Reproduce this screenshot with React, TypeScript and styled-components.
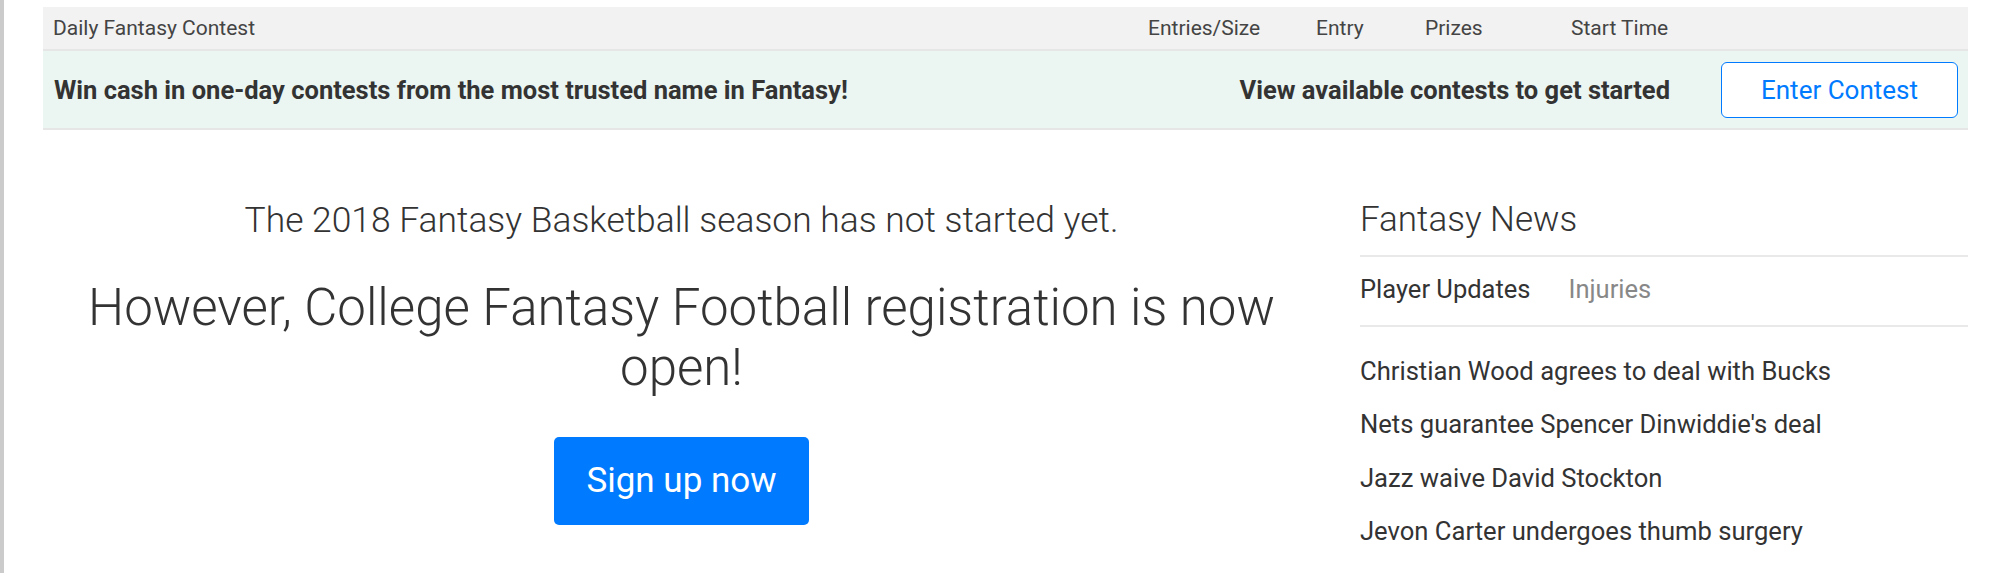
import React from "react";
import styled, { createGlobalStyle } from "styled-components";

const GlobalStyle = createGlobalStyle`
  html, body {
    margin: 0;
    padding: 0;
    background: #ffffff;
  }
  body {
    font-family: Roboto, "Noto Sans", "Liberation Sans", Arial, sans-serif;
    color: #333333;
  }
`;

const columns = "minmax(0, 1fr) 168px 109px 146px 120px 287px";

const Page = styled.div`
  display: flex;
  min-height: 100vh;
`;

const Rail = styled.div`
  flex: none;
  width: 4px;
  background: #cbcbcb;
`;

const Container = styled.div`
  flex: 1;
  min-width: 0;
  padding: 7px 36px 0 39px;
`;

const HeaderRow = styled.div`
  display: grid;
  grid-template-columns: ${columns};
  height: 42px;
  align-items: center;
  background: #f2f2f2;
  border-bottom: 2px solid #e6e6e6;
`;

const HeaderLabel = styled.div`
  padding: 0 10px;
  font-size: 21px;
  color: #444444;
  white-space: nowrap;
`;

const PromoRow = styled.div`
  display: grid;
  grid-template-columns: ${columns};
  height: 77px;
  align-items: center;
  background: #ebf5f2;
  border-bottom: 2px solid #e6e6e6;
`;

const PromoText = styled.div<{ $span: string; $right?: boolean }>`
  grid-column: ${(p) => p.$span};
  padding: 0 11px;
  font-size: 25.5px;
  font-weight: 700;
  color: #333333;
  white-space: nowrap;
  text-align: ${(p) => (p.$right ? "right" : "left")};
`;

const ActionCell = styled.div`
  display: flex;
  justify-content: flex-end;
  padding-right: 10px;
`;

const OutlineButton = styled.button`
  width: 237px;
  height: 56px;
  background: #ffffff;
  border: 1.5px solid #007bff;
  border-radius: 6px;
  color: #007bff;
  font-family: inherit;
  font-size: 26px;
  cursor: pointer;
`;

const MainRow = styled.div`
  display: grid;
  grid-template-columns: minmax(0, 1fr) 608px;
  column-gap: 40px;
  margin-top: 69px;
`;

const PromoColumn = styled.section`
  display: flex;
  flex-direction: column;
  align-items: center;
  padding: 0 20px;
  text-align: center;
`;

const Lead = styled.p`
  margin: 0;
  font-size: 35.4px;
  font-weight: 300;
  line-height: 42px;
  color: #333333;
`;

const Headline = styled.h1`
  margin: 37px 0 0;
  font-size: 51px;
  font-weight: 300;
  line-height: 60px;
  color: #333333;
`;

const SignUpButton = styled.button`
  margin-top: 39px;
  padding: 18px 32px;
  background: #007bff;
  border: none;
  border-radius: 5px;
  color: #ffffff;
  font-family: inherit;
  font-size: 35px;
  line-height: 52px;
  cursor: pointer;
`;

const NewsColumn = styled.aside`
  display: flex;
  flex-direction: column;
`;

const NewsTitle = styled.h2`
  margin: 0;
  padding-bottom: 14px;
  font-size: 35px;
  font-weight: 300;
  line-height: 42px;
  color: #333333;
  border-bottom: 2px solid #e9e9e9;
`;

const Tabs = styled.div`
  display: flex;
  gap: 38px;
  padding: 17px 0 21px;
  border-bottom: 2px solid #e9e9e9;
`;

const Tab = styled.span<{ $active?: boolean }>`
  font-size: 25.5px;
  line-height: 30px;
  color: ${(p) => (p.$active ? "#333333" : "#888888")};
`;

const NewsList = styled.ul`
  list-style: none;
  margin: 0;
  padding: 18px 0 0;
`;

const NewsItem = styled.li`
  padding: 7px 0;
  font-size: 25.6px;
  line-height: 39.3px;
  color: #333333;
  white-space: nowrap;
`;

const headers = ["Entries/Size", "Entry", "Prizes", "Start Time"];

const news = [
  "Christian Wood agrees to deal with Bucks",
  "Nets guarantee Spencer Dinwiddie's deal",
  "Jazz waive David Stockton",
  "Jevon Carter undergoes thumb surgery",
  "Jalen Jones agrees to deal with Cavaliers",
];

export default function App() {
  return (
    <>
      <GlobalStyle />
      <Page>
        <Rail />
        <Container>
          <HeaderRow>
            <HeaderLabel>Daily Fantasy Contest</HeaderLabel>
            {headers.map((h) => (
              <HeaderLabel key={h}>{h}</HeaderLabel>
            ))}
            <HeaderLabel />
          </HeaderRow>
          <PromoRow>
            <PromoText $span="1">
              Win cash in one-day contests from the most trusted name in Fantasy!
            </PromoText>
            <PromoText $span="2 / 6" $right>
              View available contests to get started
            </PromoText>
            <ActionCell>
              <OutlineButton>Enter Contest</OutlineButton>
            </ActionCell>
          </PromoRow>
          <MainRow>
            <PromoColumn>
              <Lead>The 2018 Fantasy Basketball season has not started yet.</Lead>
              <Headline>
                However, College Fantasy Football registration is now open!
              </Headline>
              <SignUpButton>Sign up now</SignUpButton>
            </PromoColumn>
            <NewsColumn>
              <NewsTitle>Fantasy News</NewsTitle>
              <Tabs>
                <Tab $active>Player Updates</Tab>
                <Tab>Injuries</Tab>
              </Tabs>
              <NewsList>
                {news.map((n) => (
                  <NewsItem key={n}>{n}</NewsItem>
                ))}
              </NewsList>
            </NewsColumn>
          </MainRow>
        </Container>
      </Page>
    </>
  );
}
